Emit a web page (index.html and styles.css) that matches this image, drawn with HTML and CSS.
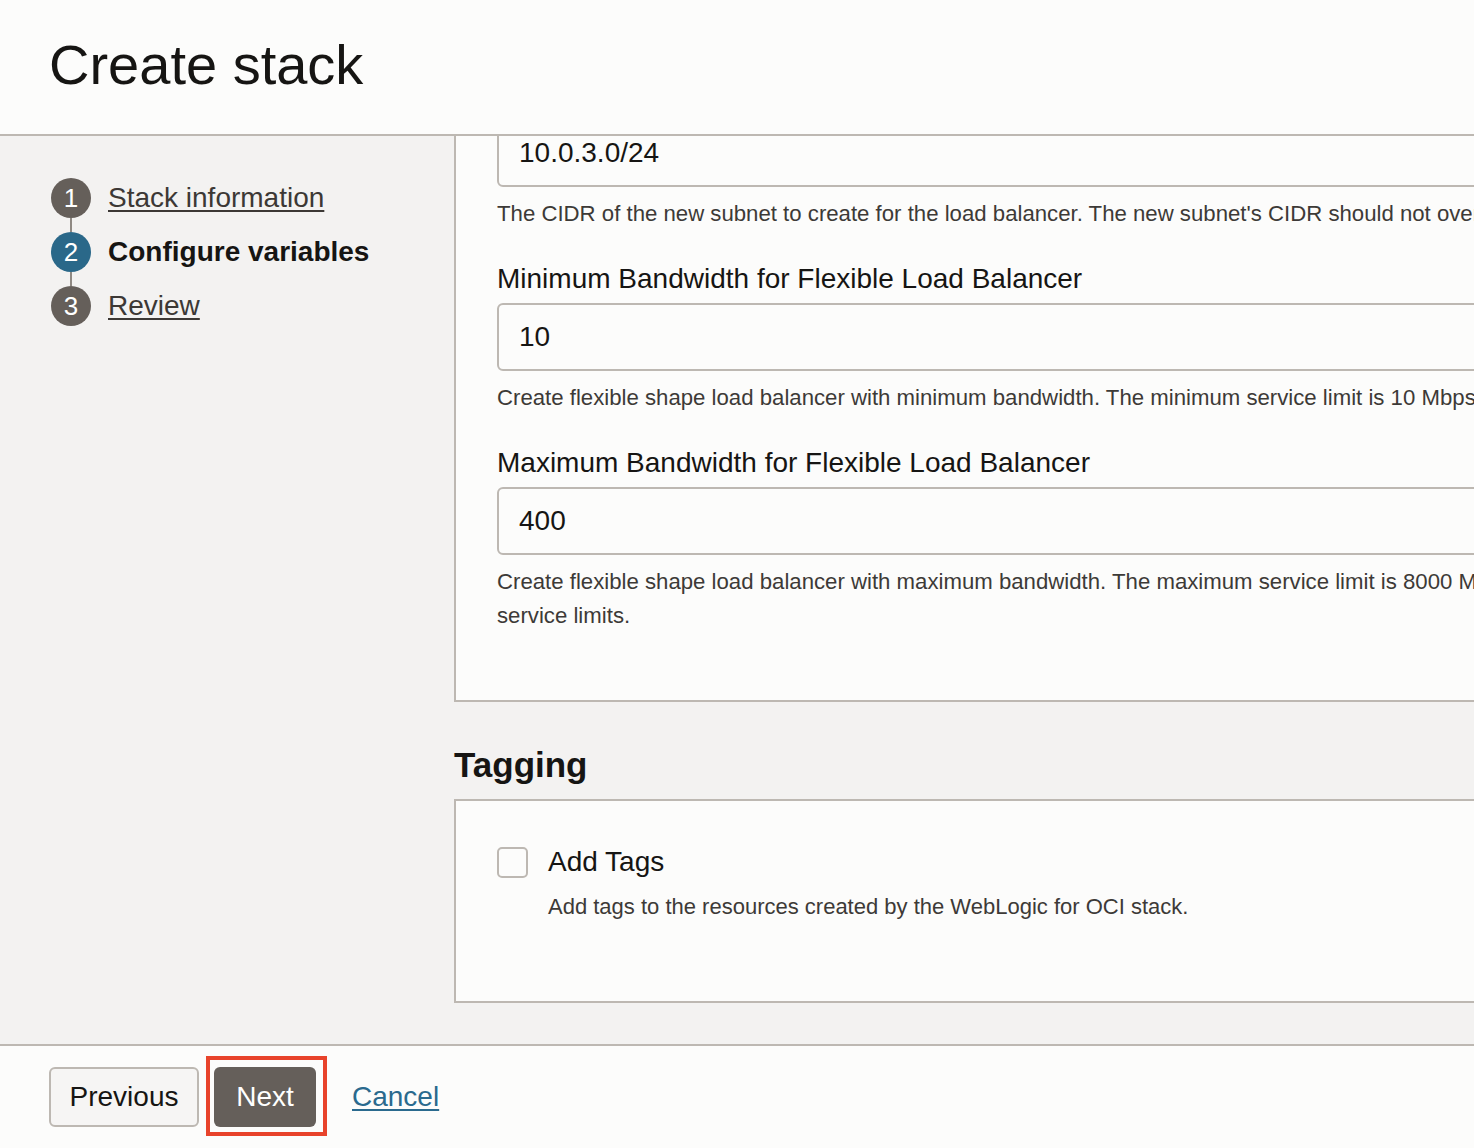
FILE: index.html
```html
<!DOCTYPE html>
<html lang="en">
<head>
<meta charset="utf-8">
<title>Create stack</title>
<link rel="stylesheet" href="styles.css">
</head>
<body>
<header class="page-header">
  <h1 class="title">Create stack</h1>
</header>
<div class="middle">
  <nav class="steps">
    <ol class="step-list">
      <li class="step"><span class="step-num">1</span><a class="step-link" href="#">Stack information</a></li>
      <li class="step active"><span class="step-num">2</span><span class="step-current">Configure variables</span></li>
      <li class="step"><span class="step-num">3</span><a class="step-link" href="#">Review</a></li>
    </ol>
  </nav>
  <main class="main">
    <section class="panel panel-vars">
      <div class="field first">
        <div class="input">10.0.3.0/24</div>
        <p class="helper">The CIDR of the new subnet to create for the load balancer. The new subnet's CIDR should not overlap.</p>
      </div>
      <div class="field">
        <label class="label">Minimum Bandwidth for Flexible Load Balancer</label>
        <div class="input">10</div>
        <p class="helper">Create flexible shape load balancer with minimum bandwidth. The minimum service limit is 10 Mbps.</p>
      </div>
      <div class="field">
        <label class="label">Maximum Bandwidth for Flexible Load Balancer</label>
        <div class="input">400</div>
        <p class="helper">Create flexible shape load balancer with maximum bandwidth. The maximum service limit is 8000 Mbps. Check your service limits.</p>
      </div>
    </section>
    <h2 class="section-title">Tagging</h2>
    <section class="panel panel-tags">
      <div class="check-row">
        <span class="checkbox"></span>
        <span class="check-label">Add Tags</span>
      </div>
      <p class="check-desc">Add tags to the resources created by the WebLogic for OCI stack.</p>
    </section>
  </main>
</div>
<footer class="footer">
  <button class="btn btn-secondary" type="button">Previous</button>
  <span class="highlight-wrap">
    <button class="btn btn-primary" type="button">Next</button>
    <span class="highlight"></span>
  </span>
  <a class="cancel" href="#">Cancel</a>
</footer>
</body>
</html>
```
FILE: styles.css
```css
* { box-sizing: border-box; }
html, body {
  margin: 0;
  padding: 0;
  height: 1148px;
  overflow: hidden;
}
body {
  font-family: "Liberation Sans", Arial, Helvetica, sans-serif;
  color: #161513;
  background: #f3f2f1;
  display: flex;
  flex-direction: column;
}
.page-header {
  height: 136px;
  background: #fcfcfb;
  border-bottom: 2px solid #bdb8b2;
  padding: 0 0 0 49px;
  flex: 0 0 auto;
}
.title {
  margin: 0;
  padding-top: 30px;
  font-size: 56px;
  font-weight: 400;
  line-height: 70px;
  letter-spacing: 0;
}
.middle {
  flex: 0 0 908px;
  display: flex;
  overflow: hidden;
  background: #f3f2f1;
}
.steps {
  flex: 0 0 454px;
  padding: 42px 0 0 51px;
}
.step-list {
  list-style: none;
  margin: 0;
  padding: 0;
}
.step {
  position: relative;
  display: flex;
  align-items: center;
  height: 40px;
  margin-bottom: 14px;
  font-size: 28px;
}
.step + .step::before {
  content: "";
  position: absolute;
  left: 19px;
  top: -14px;
  width: 2px;
  height: 14px;
  background: #8f8983;
}
.step-num {
  flex: 0 0 40px;
  width: 40px;
  height: 40px;
  border-radius: 50%;
  background: #655f5a;
  color: #fff;
  display: flex;
  align-items: center;
  justify-content: center;
  font-size: 26px;
  line-height: 1;
  margin-right: 17px;
}
.step.active .step-num { background: #2a6889; }
.step-link {
  color: #3c3835;
  text-decoration: underline;
  text-underline-offset: 3px;
  text-decoration-thickness: 2px;
}
.step-current {
  font-weight: 700;
  color: #161513;
}
.main {
  flex: 0 0 1256px;
}
.panel {
  background: #fcfcfb;
  border-left: 2px solid #bdb8b2;
  border-bottom: 2px solid #bdb8b2;
  border-top: 2px solid #bdb8b2;
}
.panel-vars {
  border-top: none;
  padding: 0 40px 67px 41px;
}
.field { display: flex; flex-direction: column; }
.field.first { margin-top: -17px; }
.label {
  font-size: 28px;
  line-height: 34px;
  margin-top: 31px;
  margin-bottom: 7px;
}
.input {
  height: 68px;
  border: 2px solid #bdb8b2;
  border-radius: 6px;
  background: #fcfcfb;
  padding: 0 20px;
  font-size: 28px;
  display: flex;
  align-items: center;
}
.helper {
  margin: 10px 0 0;
  font-size: 22.2px;
  line-height: 34px;
  color: #3d3a37;
}
.section-title {
  margin: 42px 0 13px;
  font-size: 35px;
  line-height: 42px;
  font-weight: 700;
}
.panel-tags {
  padding: 44px 40px 77px 41px;
}
.check-row {
  display: flex;
  align-items: center;
  height: 34px;
}
.checkbox {
  width: 31px;
  height: 31px;
  border: 2px solid #bdb8b2;
  border-radius: 5px;
  background: #fcfcfb;
  margin-right: 20px;
}
.check-label {
  font-size: 28px;
  line-height: 34px;
}
.check-desc {
  margin: 11px 0 0 51px;
  font-size: 22px;
  line-height: 34px;
  color: #3d3a37;
}
.footer {
  flex: 0 0 104px;
  background: #fcfcfb;
  border-top: 2px solid #bdb8b2;
  display: flex;
  align-items: flex-start;
  padding: 21px 0 0 49px;
}
.btn {
  height: 60px;
  font-family: inherit;
  font-size: 28px;
  border-radius: 6px;
  cursor: pointer;
}
.btn-secondary {
  width: 150px;
  background: #f6f5f4;
  border: 2px solid #bdb8b2;
  color: #161513;
}
.highlight-wrap {
  position: relative;
  margin-left: 15px;
  display: inline-flex;
}
.btn-primary {
  width: 102px;
  background: #655f5a;
  border: none;
  color: #fff;
}
.highlight {
  position: absolute;
  left: -8px;
  top: -11px;
  right: -11px;
  bottom: -9px;
  border: 4px solid #e8432b;
  pointer-events: none;
}
.cancel {
  margin-left: 36px;
  line-height: 60px;
  font-size: 28px;
  color: #2a6a8e;
  text-decoration: underline;
  text-underline-offset: 3px;
  text-decoration-thickness: 2px;
}
```
